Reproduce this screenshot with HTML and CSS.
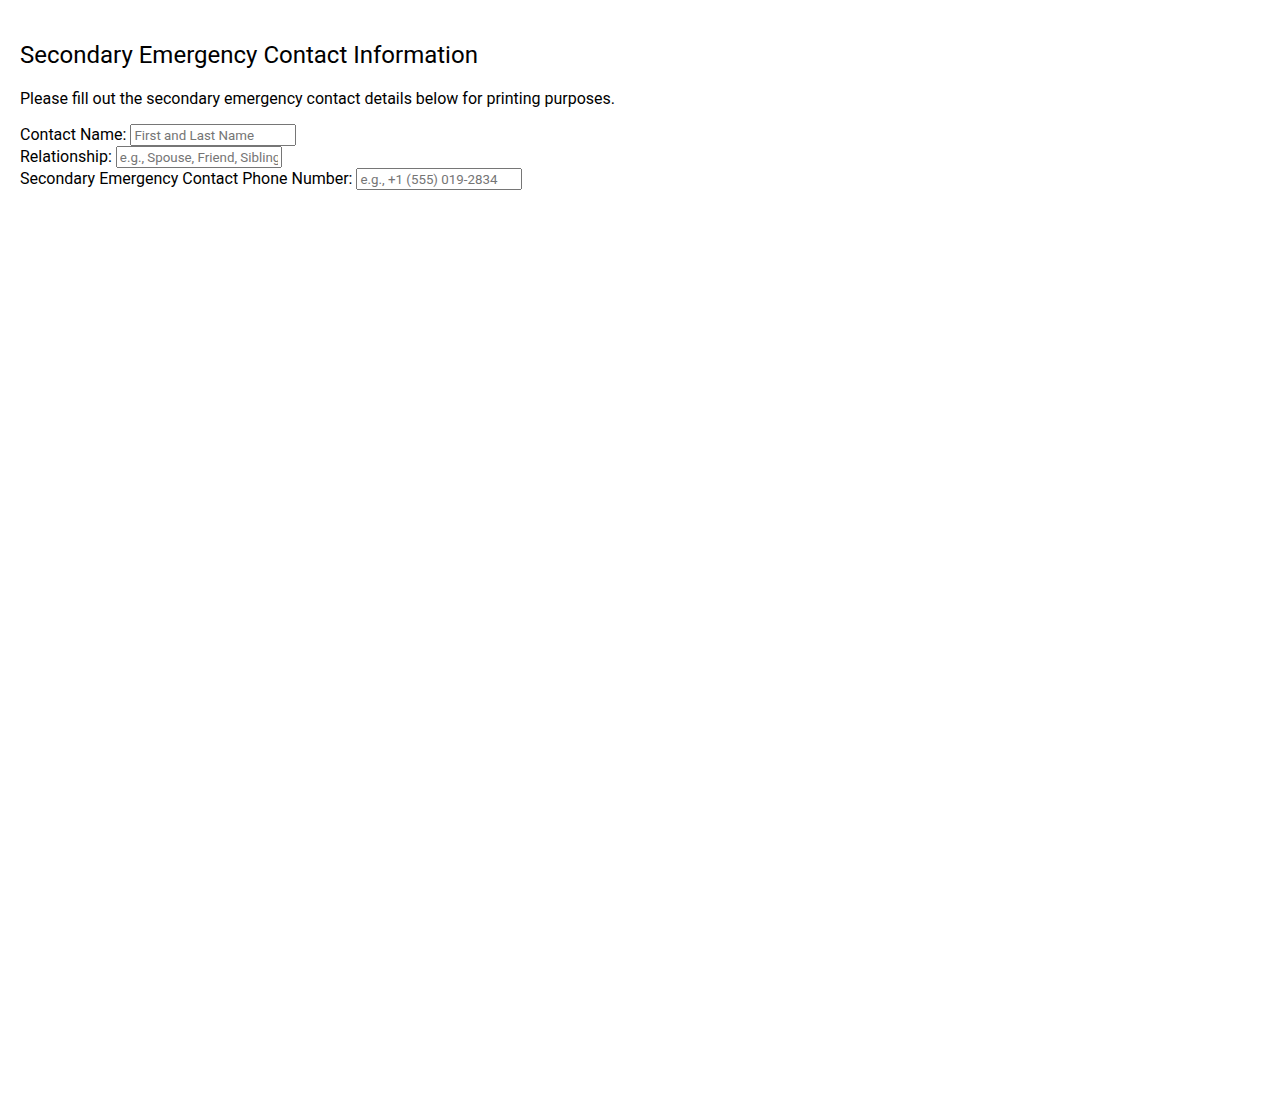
FILE: index.html
```html
<!DOCTYPE html>
<html lang="en">
<head>
    <meta charset="UTF-8">
    <meta name="viewport" content="width=device-width, initial-scale=1.0">
    <title>Secondary Emergency Contact</title>
    <link rel="stylesheet" href="styles.css">
</head>
<body>
    <h2 class="form-title">Secondary Emergency Contact Information</h2>
    <p class="form-intro">Please fill out the secondary emergency contact details below for printing purposes.</p>
    <form class="contact-form">
        <label for="contact-name">Contact Name:</label>
        <input type="text" id="contact-name" class="field" placeholder="First and Last Name"><br>
        <label for="relationship">Relationship:</label>
        <input type="text" id="relationship" class="field" placeholder="e.g., Spouse, Friend, Sibling"><br>
        <label for="phone">Secondary Emergency Contact Phone Number:</label>
        <input type="tel" id="phone" class="field" placeholder="e.g., +1 (555) 019-2834">
    </form>
</body>
</html>
```

FILE: styles.css
```css
body {
    margin: 0;
    padding: 21px 20px 20px;
    font-family: Roboto, 'Liberation Sans', sans-serif;
    font-size: 16px;
    color: #000;
    background: #fff;
}

.form-title {
    font-size: 24px;
    font-weight: normal;
    margin: 20px 0;
}

.form-intro {
    margin: 0 0 16px;
}

.field {
    font-family: Roboto, 'Liberation Sans', sans-serif;
    box-sizing: border-box;
    width: 166px;
    height: 22px;
}
```
